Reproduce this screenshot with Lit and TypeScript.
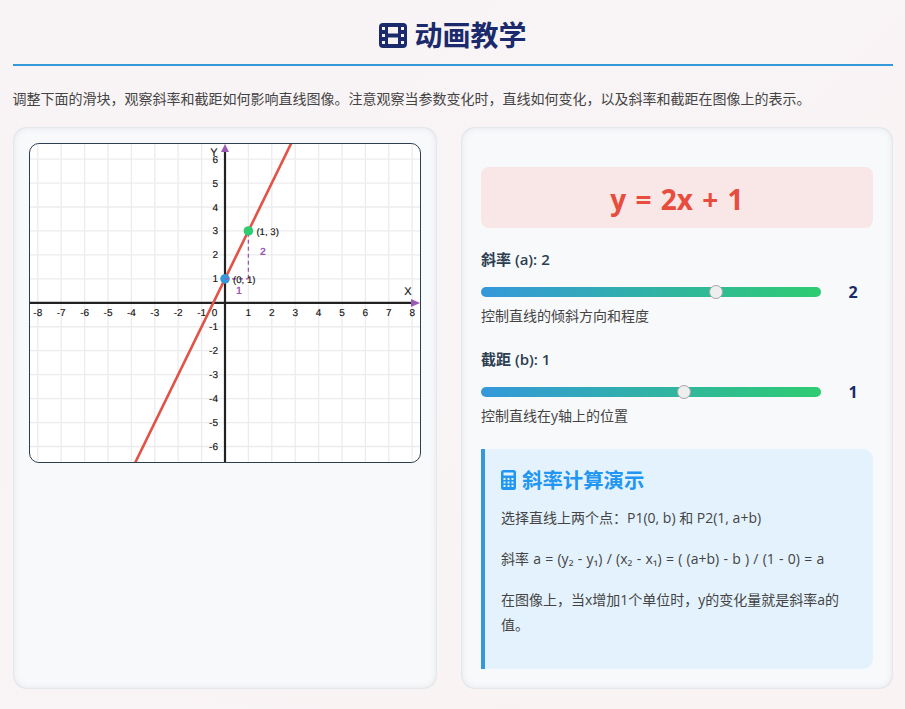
import { LitElement, html, css, svg } from "lit";
import { customElement, state } from "lit/decorators.js";

const OX = 225, OY = 302.8, UX = 23.4, UY = 23.95;
const px = (x: number) => OX + x * UX;
const py = (y: number) => OY - y * UY;
const range = (a: number, b: number) => Array.from({ length: b - a + 1 }, (_, i) => a + i);

@customElement("app-root")
export class AppRoot extends LitElement {
  @state() a = 2;
  @state() b = 1;

  static styles = css`
    :host { display: block; min-height: 709px; box-sizing: border-box; padding: 0 12.5px 20px;
      background: linear-gradient(135deg, #f8f4f6, #f9f3f3); font-family: "Open Sans", "Noto Sans CJK SC", sans-serif; color: #444; }
    * { box-sizing: border-box; }
    header { height: 66px; border-bottom: 2px solid #3498db; display: flex; align-items: center; justify-content: center; gap: 7px; padding-top: 6px; padding-left: 1px; }
    h1 { margin: 0; font-size: 28px; line-height: 40px; font-weight: 700; color: #1a2a6c; }
    .film { width: 28px; height: 25px; fill: #1a2a6c; }
    .intro { margin: 0; padding-top: 23px; height: 61px; font-size: 14px; line-height: 20px; color: #444; }
    .cols { display: grid; grid-template-columns: 424.5px 431.5px; gap: 24px; }
    .card { height: 562px; border-radius: 14px; background: #f8f9fb; box-shadow: inset 0 0 0 1px rgba(40,60,80,.035), inset 0 0 7px rgba(40,60,80,.13); }
    .left { padding: 16px 16.5px; }
    .graph { display: block; width: 392px; height: 320px; border: 1px solid #2c3e50; border-radius: 10px; background: #fff; overflow: hidden; }
    .graph svg { display: block; width: 390px; height: 318px; }
    .graph text { font-family: "Liberation Sans", sans-serif; font-size: 10px; fill: #111; stroke: #111; stroke-width: .15px; text-rendering: geometricPrecision; }
    .graph text.pt { font-size: 9.6px; }
    .graph text.axis { font-size: 11px; }
    .graph text.delta { fill: #9b59b6; stroke: none; font-weight: 700; font-size: 10.5px; }
    .right { padding: 40px 19.500px 20px 20px; }
    .eq { height: 61px; border-radius: 8px; background: #f9e6e6; color: #e74c3c; font-size: 28px; font-weight: 700; line-height: 65px; text-align: center; word-spacing: 2px; }
    .group { margin-top: 20px; }
    .group + .group { margin-top: 22px; }
    .label { display: block; font-size: 15px; line-height: 22px; color: #2c3e50; font-weight: 600; }
    .label b { font-weight: 700; }
    .row { display: flex; align-items: center; gap: 15px; margin: 10px 0 2px; height: 24px; }
    input[type=range] { -webkit-appearance: none; appearance: none; flex: 1; min-width: 0; margin: 0; height: 10px; border-radius: 5px; background: linear-gradient(90deg, #3498db, #2ecc71); outline: none; }
    input[type=range]::-webkit-slider-thumb { -webkit-appearance: none; width: 14px; height: 14px; border-radius: 50%; background: #eee; border: 1px solid #a8a8a8; }
    .val { width: 37px; padding-right: 3px; text-align: center; color: #1a2a6c; font-size: 16px; font-weight: 700; }
    .desc { margin: 0; font-size: 14px; line-height: 20px; color: #444; }
    .info { margin-top: 23px; height: 220px; padding: 17px 16px; border-left: 4px solid #3498db; border-radius: 0 10px 10px 0; background: #e3f2fd; }
    h3 { margin: 0 0 10.5px; display: flex; align-items: center; gap: 6px; font-size: 20.4px; line-height: 28px; font-weight: 700; color: #2196f3; }
    .calc { width: 15px; height: 20px; fill: #2196f3; }
    .info p { margin: 0 0 16px; font-size: 14px; line-height: 25px; color: #444; }
    .info p.math { word-spacing: .6px; }
  `;

  private graph() {
    const { a, b } = this;
    const line = (x: number) => py(a * x + b);
    return svg`
      <svg viewBox="30 144 390 318">
        ${range(-8, 8).map((i) => svg`<line x1=${px(i)} x2=${px(i)} y1="144" y2="462" stroke="#ececec" stroke-width="1.3"/>`)}
        ${range(-6, 6).map((i) => svg`<line x1="30" x2="420" y1=${py(i)} y2=${py(i)} stroke="#ececec" stroke-width="1.3"/>`)}
        <line x1="30" x2="414" y1=${OY} y2=${OY} stroke="#222" stroke-width="2.2"/>
        <line x1=${OX} x2=${OX} y1="150" y2="462" stroke="#222" stroke-width="2.2"/>
        <polygon points="221,152 229,152 225,144" fill="#9b59b6"/>
        <polygon points="411,299 411,307 420,303" fill="#9b59b6"/>
        <text class="axis" x="408" y="295" text-anchor="middle">X</text>
        <text class="axis" x="214" y="156" text-anchor="middle">Y</text>
        ${range(-8, 8).filter((i) => i !== 0).map((i) => svg`<text x=${px(i)} y="315.500" text-anchor="middle">${i}</text>`)}
        <text x="214.500" y="315.500" text-anchor="middle">0</text>
        ${range(-6, 6).filter((i) => i !== 0).map((i) => svg`<text x="218" y=${py(i) + 3.5} text-anchor="end">${i}</text>`)}
        <line x1=${px(-10)} y1=${line(-10)} x2=${px(10)} y2=${line(10)} stroke="#e05346" stroke-width="2.6"/>
        <circle cx=${px(0)} cy=${py(b)} r="4.8" fill="#3498db"/>
        <circle cx=${px(1)} cy=${py(a + b)} r="4.8" fill="#2ecc71"/>
        <line x1=${px(0)} x2=${px(1)} y1=${py(b)} y2=${py(b)} stroke="#9b59b6" stroke-width="1.3" stroke-dasharray="4 3"/>
        <line x1=${px(1)} x2=${px(1)} y1=${py(b)} y2=${py(a + b) + 4} stroke="#9b59b6" stroke-width="1.3" stroke-dasharray="4 3"/>
        <text class="pt" x=${px(0) + 8} y=${py(b) + 4.5}>(${0}, ${b})</text>
        <text class="pt" x=${px(1) + 8} y=${py(a + b) + 4.5}>(${1}, ${a + b})</text>
        <text class="delta" x=${px(0.6)} y=${py(b) + 15.5} text-anchor="middle">1</text>
        <text class="delta" x=${px(1) + 14.5} y=${py(b + a / 2)} text-anchor="middle">${a}</text>
      </svg>`;
  }

  render() {
    const { a, b } = this;
    return html`
      <header>
        <svg class="film" viewBox="0 0 28 25"><path fill-rule="evenodd" d="M4 0h20a4 4 0 0 1 4 4v17a4 4 0 0 1-4 4H4a4 4 0 0 1-4-4V4a4 4 0 0 1 4-4zM3 4v3h3V4zM3 11v3h3v-3zM3 18v3h3v-3zM22 4v3h3V4zM22 11v3h3v-3zM22 18v3h3v-3zM9 4v6.500h10V4zM9 14.500V21h10v-6.500z"/></svg>
        <h1>动画教学</h1>
      </header>
      <p class="intro">调整下面的滑块，观察斜率和截距如何影响直线图像。注意观察当参数变化时，直线如何变化，以及斜率和截距在图像上的表示。</p>
      <div class="cols">
        <section class="card left"><div class="graph">${this.graph()}</div></section>
        <section class="card right">
          <div class="eq">y = ${a}x + ${b}</div>
          <div class="group">
            <label class="label"><b>斜率</b> (a): ${a}</label>
            <div class="row">
              <input type="range" min="-5" max="5" step="1" .value=${String(a)} @input=${(e: Event) => (this.a = Number((e.target as HTMLInputElement).value))} />
              <span class="val">${a}</span>
            </div>
            <p class="desc">控制直线的倾斜方向和程度</p>
          </div>
          <div class="group">
            <label class="label"><b>截距</b> (b): ${b}</label>
            <div class="row">
              <input type="range" min="-5" max="5" step="1" .value=${String(b)} @input=${(e: Event) => (this.b = Number((e.target as HTMLInputElement).value))} />
              <span class="val">${b}</span>
            </div>
            <p class="desc">控制直线在y轴上的位置</p>
          </div>
          <div class="info">
            <h3><svg class="calc" viewBox="0 0 15 20"><path fill-rule="evenodd" d="M2.500 0h10A2.500 2.500 0 0 1 15 2.500v15a2.500 2.500 0 0 1-2.500 2.500h-10A2.500 2.500 0 0 1 0 17.500v-15A2.500 2.500 0 0 1 2.500 0zM2.500 2.500v3h10v-3zM2.500 8v2h2V8zM6.500 8v2h2V8zM10.500 8v2h2V8zM2.500 11.500v2h2v-2zM6.500 11.500v2h2v-2zM10.500 11.500v2h2v-2zM2.500 15v2h2v-2zM6.500 15v2h2v-2zM10.500 15v2h2v-2z"/></svg>斜率计算演示</h3>
            <p>选择直线上两个点：P1(0, b) 和 P2(1, a+b)</p>
            <p class="math">斜率 a = (y₂ - y₁) / (x₂ - x₁) = ( (a+b) - b ) / (1 - 0) = a</p>
            <p>在图像上，当x增加1个单位时，y的变化量就是斜率a的值。</p>
          </div>
        </section>
      </div>
    `;
  }
}
